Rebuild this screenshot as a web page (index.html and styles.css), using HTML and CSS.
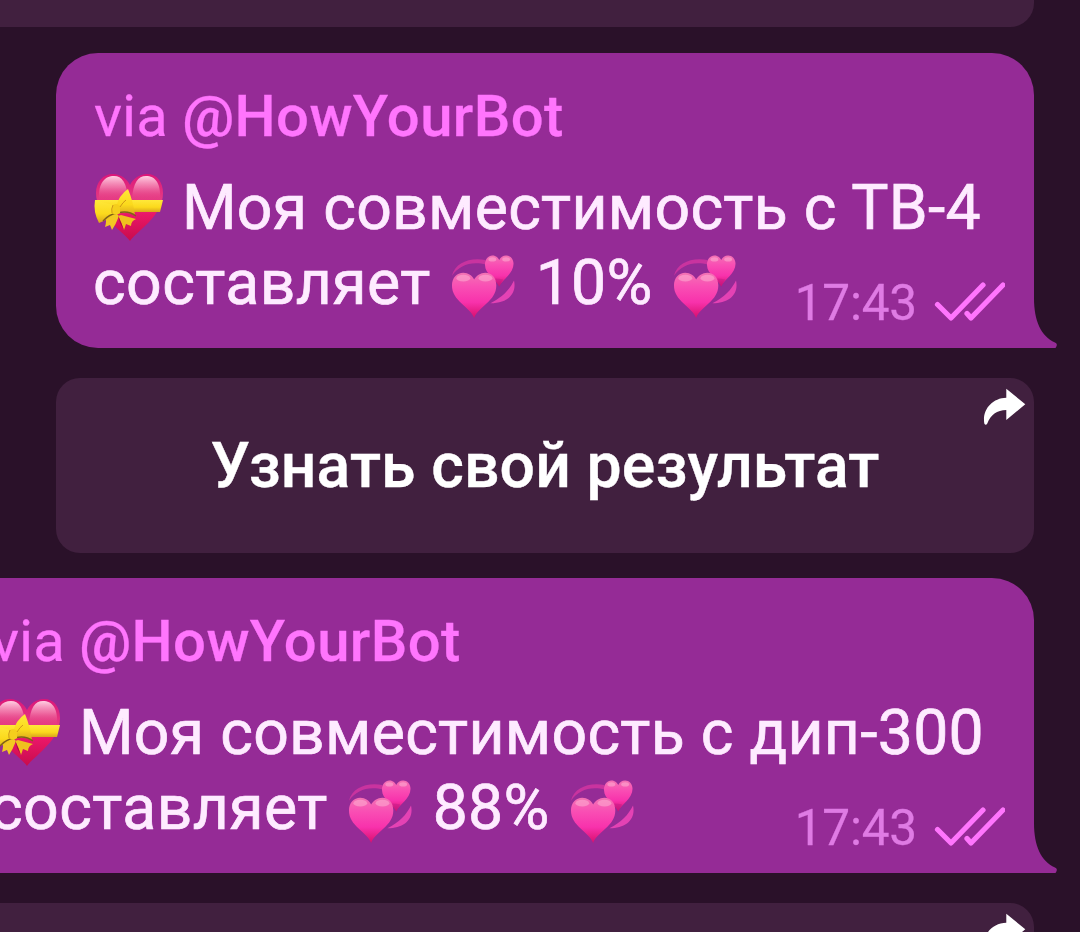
FILE: index.html
```
<!DOCTYPE html>
<html lang="ru">

<head>
    <meta charset="UTF-8">
    <meta name="viewport" content="width=device-width, initial-scale=1.0">
    <title>HowYourBot</title>
    <link rel="stylesheet" href="styles.css">
</head>

<body>
    <svg class="defs" width="0" height="0">
        <defs>
            <linearGradient id="heartFill" x1="0" y1="0" x2="0" y2="1">
                <stop offset="0" stop-color="#f472b4" />
                <stop offset="0.3" stop-color="#f94fb4" />
                <stop offset="0.65" stop-color="#f832ac" />
                <stop offset="1" stop-color="#d80f6c" />
            </linearGradient>
            <linearGradient id="giftFill" x1="0" y1="0" x2="0" y2="1">
                <stop offset="0" stop-color="#dc1678" />
                <stop offset="0.4" stop-color="#e63c84" />
                <stop offset="0.6" stop-color="#e91768" />
                <stop offset="1" stop-color="#c80c4c" />
            </linearGradient>
            <linearGradient id="shine" x1="0" y1="0" x2="0" y2="1">
                <stop offset="0" stop-color="#ffcfe2" />
                <stop offset="0.5" stop-color="#f380ae" stop-opacity="0.8" />
                <stop offset="1" stop-color="#ea5089" stop-opacity="0.1" />
            </linearGradient>
            <linearGradient id="ribbon" x1="0" y1="0" x2="0" y2="1">
                <stop offset="0" stop-color="#ffe83a" />
                <stop offset="0.6" stop-color="#fbd91c" />
                <stop offset="1" stop-color="#d9a51c" />
            </linearGradient>
        </defs>
        <symbol id="gift-heart" viewBox="0 0 72 70">
            <path d="M37 68C30 58 3 43 3 20C3 9 10 1 20 1C28 1 34 6 37 12C40 6 46 1 54 1C64 1 70 9 70 20C70 43 44 58 37 68Z" fill="url(#giftFill)" />
            <path d="M6 26C5 10 12 3 21 3C29 3 34 10 35 26Z" fill="url(#shine)" />
            <path d="M39 26C40 10 45 3 53 3C62 3 68 10 67 26Z" fill="url(#shine)" />
            <path d="M2 27H70L67 39H5Z" fill="url(#ribbon)" />
            <path d="M23 40L12 44Q14 47 12 54L17 52L19 57Q23 51 26 43Z" fill="#f3c823" />
            <path d="M28 42L43 46Q38 48 38 53L33 51L31 57Q29 50 25 43Z" fill="#efc01f" />
            <path d="M25 42L31 57L27 50Z" fill="#a90d3d" />
            <path d="M24 33Q12 30 2 27Q0 39 6 50Q14 47 24 40Z" fill="url(#ribbon)" />
            <path d="M23 34Q26 22 35 16Q40 28 42 42Q32 38 25 41Z" fill="url(#ribbon)" />
            <path d="M10 48Q16 41 25 40Q35 37 43 43" fill="none" stroke="#806018" stroke-width="1.300" />
            <path d="M20 32Q25 29 27 34V40Q23 43 19 40Z" fill="#f5ce1c" />
            <path d="M20 32Q18 36 19 40M27 34Q30 29 33 27" fill="none" stroke="#c98f16" stroke-width="0.900" />
        </symbol>
        <symbol id="two-hearts" viewBox="0 0 67 68">
            <path d="M2 23C5 10 20 4 36 7L37 12C22 8 10 12 2 23Z" fill="#c9339f" />
            <path d="M65 28C68 42 58 51 41 51C53 45 60 38 65 28Z" fill="#e442b4" />
            <path d="M50 34C47 27 35.500 22 35.500 12C35.500 6 39 2.500 43 2.500C47 2.500 49 5 50 7C51 4.500 54 2.500 57 2.500C61 2.500 64.500 6 64.500 11C64.500 21 53 27 50 34Z" fill="url(#heartFill)" />
            <path d="M47 30L50 34L54 27Q50 26 46 26Z" fill="#b51684" opacity="0.400" />
            <path d="M24.500 66C20 54 2 49 2 33C2 25 7 20 13.500 20C18.500 20 23 23 24.500 27C26.500 23 31 20 36 20C42.500 20 47 25 47 33C47 49 29 54 24.500 66Z" fill="url(#heartFill)" />
            <ellipse cx="13.500" cy="25.500" rx="7" ry="3.500" fill="#ffb7d6" opacity="0.500" />
            <ellipse cx="36" cy="25.500" rx="7" ry="3.500" fill="#ffb7d6" opacity="0.500" />
            <ellipse cx="43" cy="6.500" rx="4" ry="2.200" fill="#ffb7d6" opacity="0.500" />
            <ellipse cx="57" cy="6.500" rx="4" ry="2.200" fill="#ffb7d6" opacity="0.500" />
        </symbol>
        <symbol id="checks" viewBox="0 0 74 44">
            <path d="M7.500 24.500L21 38L53 5M37 33.500L41 38L73 5" transform="translate(-1 0)" fill="none" stroke="#ff75fd" stroke-width="5.200" stroke-linecap="round" stroke-linejoin="round" />
        </symbol>
        <symbol id="share" viewBox="0 0 44 38">
            <path d="M23.300 0.700L42.300 16.300L23.300 32V22C14 22 7.500 27 4.300 35.500Q2.700 38 1.300 35.500C-1 22 9 10 23.300 9.700Z" fill="#fff" />
        </symbol>
        <symbol id="tail" viewBox="0 0 25 50">
            <path d="M0 0H1C1 23 8 38 22 44.500Q25.500 46 22.500 50H0Z" fill="#952b96" />
        </symbol>
    </svg>

    <div class="chat">
        <div class="keyboard wide first"></div>

        <div class="bubble">
            <div class="via">via <b>@HowYourBot</b></div>
            <div class="line">
                <svg class="gift"><use href="#gift-heart" /></svg>
                <span class="title">Моя совместимость с ТВ-4</span>
            </div>
            <div class="line">
                <span class="word">составляет</span>
                <svg class="hearts"><use href="#two-hearts" /></svg>
                <span class="percent">10%</span>
                <svg class="hearts"><use href="#two-hearts" /></svg>
            </div>
            <div class="meta">
                <span class="time">17:43</span>
                <svg class="checks"><use href="#checks" /></svg>
            </div>
            <svg class="tail"><use href="#tail" /></svg>
        </div>

        <div class="keyboard">
            <span class="label">Узнать свой результат</span>
            <svg class="share"><use href="#share" /></svg>
        </div>

        <div class="bubble wide">
            <div class="via">via <b>@HowYourBot</b></div>
            <div class="line">
                <svg class="gift"><use href="#gift-heart" /></svg>
                <span class="title">Моя совместимость с дип-300</span>
            </div>
            <div class="line">
                <span class="word">составляет</span>
                <svg class="hearts"><use href="#two-hearts" /></svg>
                <span class="percent">88%</span>
                <svg class="hearts"><use href="#two-hearts" /></svg>
            </div>
            <div class="meta">
                <span class="time">17:43</span>
                <svg class="checks"><use href="#checks" /></svg>
            </div>
            <svg class="tail"><use href="#tail" /></svg>
        </div>

        <div class="keyboard wide">
            <svg class="share"><use href="#share" /></svg>
        </div>
    </div>
</body>

</html>
```
FILE: styles.css
```
body {
    margin: 0;
    background-color: #2a1129;
    font-family: Roboto, sans-serif;
    overflow: hidden;
}

.defs {
    display: block;
}

.chat {
    display: flex;
    flex-direction: column;
    align-items: flex-end;
    height: 932px;
    padding-right: 46px;
    overflow: hidden;
}

.bubble {
    position: relative;
    flex: none;
    box-sizing: border-box;
    width: 978px;
    height: 295px;
    margin-bottom: 30px;
    padding: 29px 38px 0;
    border-radius: 42px 42px 0 42px;
    background-color: #952b96;
}

.wide {
    width: 1081px;
}

.via {
    height: 68px;
    margin-bottom: 20px;
    font-size: 58px;
    line-height: 68px;
    color: #ff75fd;
    white-space: nowrap;
    -webkit-text-stroke: 0.3px #ff75fd;
}

.via b {
    font-weight: 500;
    letter-spacing: 0.4px;
}

.line {
    display: flex;
    height: 75px;
    font-size: 62.5px;
    line-height: 75px;
    letter-spacing: 0.28px;
    color: #feebff;
    white-space: nowrap;
    -webkit-text-stroke: 0.7px #feebff;
}

.word {
    margin-left: -1px;
    letter-spacing: 0.4px;
}

.gift {
    flex: none;
    width: 72px;
    height: 70px;
    margin: 3px 17px 0 -1px;
}

.hearts {
    flex: none;
    width: 66px;
    height: 67px;
    margin: 8px 20px 0 19px;
}

.meta {
    position: absolute;
    right: 29px;
    bottom: 16px;
    display: flex;
    gap: 14px;
    font-size: 49.5px;
    line-height: 58px;
    letter-spacing: -0.2px;
    color: #df7be4;
    -webkit-text-stroke: 0.3px #df7be4;
}

.checks {
    width: 74px;
    height: 44px;
    margin-top: 6px;
}

.tail {
    position: absolute;
    right: -24px;
    bottom: 0;
    width: 25px;
    height: 50px;
}

.keyboard {
    position: relative;
    flex: none;
    display: flex;
    align-items: center;
    justify-content: center;
    width: 978px;
    height: 175px;
    margin-bottom: 25px;
    border-radius: 24px;
    background-color: #41203f;
}

.keyboard.wide {
    width: 1081px;
}

.keyboard.first {
    height: 27px;
    margin-bottom: 26px;
    border-radius: 0 0 24px 24px;
}

.label {
    font-size: 62.5px;
    font-weight: 500;
    line-height: 73px;
    letter-spacing: 0.1px;
    color: #fff;
    padding-bottom: 1px;
    -webkit-text-stroke: 0.4px #fff;
}

.share {
    position: absolute;
    top: 10px;
    right: 7px;
    width: 44px;
    height: 38px;
}
```
